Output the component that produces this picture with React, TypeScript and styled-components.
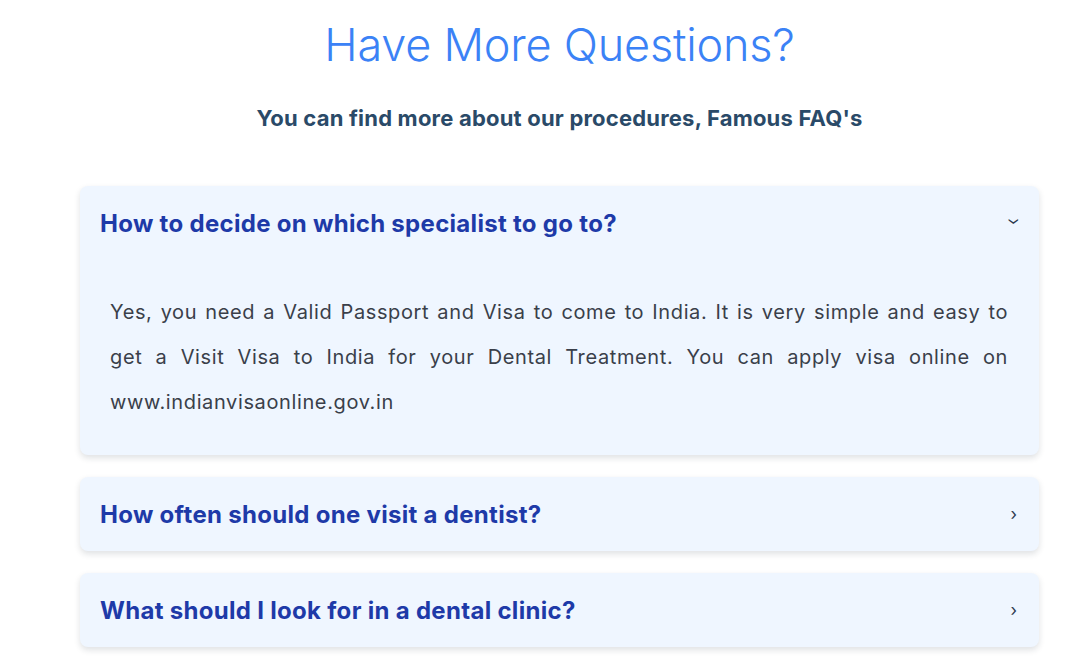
import React, { useState } from 'react'
import styled, { createGlobalStyle } from 'styled-components'

const GlobalStyle = createGlobalStyle`
  body {
    margin: 0;
    background: #ffffff;
    font-family: Inter, 'Noto Sans', sans-serif;
  }
`

type Faq = {
  question: string
  answer: string
}

const faqs: Faq[] = [
  {
    question: 'How to decide on which specialist to go to?',
    answer:
      'Yes, you need a Valid Passport and Visa to come to India. It is very simple and easy to get a Visit Visa to India for your Dental Treatment. You can apply visa online on www.indianvisaonline.gov.in',
  },
  {
    question: 'How often should one visit a dentist?',
    answer:
      'We recommend a routine check-up and cleaning every six months, or as advised by your dentist.',
  },
  {
    question: 'What should I look for in a dental clinic?',
    answer:
      'Look for qualified specialists, modern equipment, strict sterilisation and clear pricing.',
  },
]

const Section = styled.section`
  width: 959px;
  margin-left: 80px;
  padding-top: 16px;
  padding-bottom: 20px;
`

const Title = styled.h1`
  margin: 0;
  text-align: center;
  font-size: 45px;
  line-height: 58px;
  font-weight: 300;
  color: #3b82f6;
  letter-spacing: -0.2px;
`

const Subtitle = styled.p`
  margin: 30px 0 0;
  text-align: center;
  font-size: 22px;
  line-height: 28px;
  font-weight: 700;
  color: #2a4a68;
  letter-spacing: 0.2px;
`

const List = styled.div`
  margin-top: 54px;
  display: flex;
  flex-direction: column;
  gap: 22px;
`

const Card = styled.div`
  background: #eff6ff;
  border-radius: 8px;
  box-shadow: 0 3px 6px rgba(30, 41, 59, 0.14);
`

const Header = styled.button`
  all: unset;
  box-sizing: border-box;
  width: 100%;
  height: 74px;
  padding: 0 20px;
  display: flex;
  align-items: center;
  justify-content: space-between;
  cursor: pointer;
`

const Question = styled.span`
  font-size: 24px;
  font-weight: 700;
  color: #1e3aa8;
  letter-spacing: 0.3px;
`

const Chevron = styled.span<{ $open: boolean }>`
  display: inline-block;
  margin-right: 2px;
  font-size: 17px;
  line-height: 1;
  color: #2d3a4f;
  transform: ${({ $open }) => ($open ? 'rotate(90deg) translateX(-2px) scaleY(1.2)' : 'none')};
`

const Answer = styled.p`
  margin: 0;
  padding: 30px 31px 30px 30px;
  font-size: 20px;
  line-height: 45px;
  font-weight: 400;
  color: #3a3f4a;
  text-align: justify;
  letter-spacing: 0.62px;
`

const App = () => {
  const [open, setOpen] = useState<number>(0)
  return (
    <>
      <GlobalStyle />
      <Section>
        <Title>Have More Questions?</Title>
        <Subtitle>You can find more about our procedures, Famous FAQ's</Subtitle>
        <List>
          {faqs.map((faq, i) => (
            <Card key={faq.question}>
              <Header onClick={() => setOpen(open === i ? -1 : i)}>
                <Question>{faq.question}</Question>
                <Chevron $open={open === i}>›</Chevron>
              </Header>
              {open === i && <Answer>{faq.answer}</Answer>}
            </Card>
          ))}
        </List>
      </Section>
    </>
  )
}

export default App
